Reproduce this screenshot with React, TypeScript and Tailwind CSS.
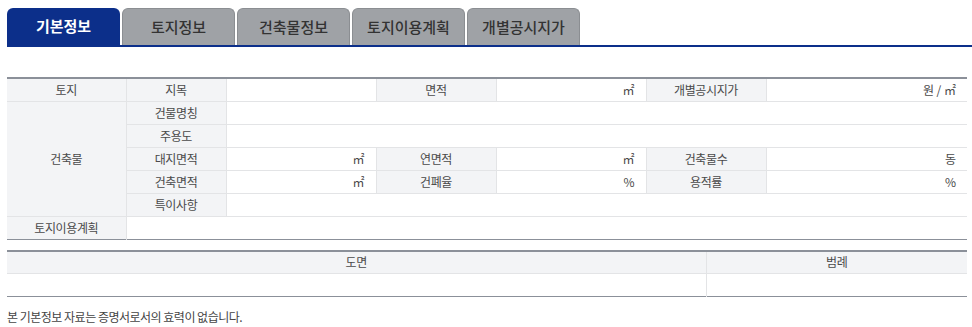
import React from 'react';

const tabs = ['기본정보', '토지정보', '건축물정보', '토지이용계획', '개별공시지가'];

const th = 'h-[23px] bg-[#f3f4f6] border border-[#e3e4e6] text-center font-normal text-[#4a4a4a] p-0 tracking-[-0.4px]';
const td = 'h-[23px] border border-[#e3e4e6] bg-white text-right pr-[11px] text-[#4a4a4a] p-0';

export default function App() {
  return (
    <div
      className="w-[972px] h-[327px] bg-white pt-[8px] text-[12px]"
      style={{ fontFamily: '"Noto Sans CJK KR", "Noto Sans", sans-serif' }}
    >
      {/* 탭 */}
      <div className="flex gap-[2px] pl-[7px] h-[37px]">
        {tabs.map((t, i) => (
          <div
            key={t}
            className={
              i === 0
                ? 'w-[113px] h-full rounded-t-[6px] bg-[#0c2f8a] text-white font-bold text-[15px] flex items-center justify-center'
                : 'w-[113px] h-full rounded-t-[6px] bg-[#9fa2a6] border border-b-0 border-[#8b8e92] text-[#333] font-medium text-[15px] flex items-center justify-center'
            }
          >
            {t}
          </div>
        ))}
      </div>
      <div className="ml-[7px] h-[2px] bg-[#0c2f8a]" />

      {/* 기본정보 표 */}
      <div className="pl-[7px] pr-[5px] pt-[30px]">
        <table className="w-[960px] table-fixed border-collapse border-t-2 border-t-[#8b9099] border-b border-b-[#8b9099] leading-none">
          <colgroup>
            <col className="w-[119px]" />
            <col className="w-[100px]" />
            <col className="w-[150px]" />
            <col className="w-[120px]" />
            <col className="w-[150px]" />
            <col className="w-[120px]" />
            <col className="w-[201px]" />
          </colgroup>
          <tbody>
            <tr>
              <th className={th + ' border-l-0'}>토지</th>
              <th className={th}>지목</th>
              <td className={td}></td>
              <th className={th}>면적</th>
              <td className={td}>㎡</td>
              <th className={th}>개별공시지가</th>
              <td className={td + ' border-r-0'}>원 / ㎡</td>
            </tr>
            <tr>
              <th rowSpan={5} className={th + ' border-l-0'}>건축물</th>
              <th className={th}>건물명칭</th>
              <td colSpan={5} className={td + ' border-r-0'}></td>
            </tr>
            <tr>
              <th className={th}>주용도</th>
              <td colSpan={5} className={td + ' border-r-0'}></td>
            </tr>
            <tr>
              <th className={th}>대지면적</th>
              <td className={td}>㎡</td>
              <th className={th}>연면적</th>
              <td className={td}>㎡</td>
              <th className={th}>건축물수</th>
              <td className={td + ' border-r-0'}>동</td>
            </tr>
            <tr>
              <th className={th}>건축면적</th>
              <td className={td}>㎡</td>
              <th className={th}>건폐율</th>
              <td className={td}>%</td>
              <th className={th}>용적률</th>
              <td className={td + ' border-r-0'}>%</td>
            </tr>
            <tr>
              <th className={th}>특이사항</th>
              <td colSpan={5} className={td + ' border-r-0'}></td>
            </tr>
            <tr>
              <th className={th + ' border-l-0 border-b-0'}>토지이용계획</th>
              <td colSpan={6} className={td + ' border-r-0 border-b-0'}></td>
            </tr>
          </tbody>
        </table>
      </div>

      {/* 도면 / 범례 */}
      <div className="pl-[7px] pr-[5px] pt-[10px]">
        <table className="w-[960px] table-fixed border-collapse border-t-2 border-t-[#8b9099] border-b border-b-[#8b9099] leading-none">
          <colgroup>
            <col className="w-[699px]" />
            <col className="w-[261px]" />
          </colgroup>
          <tbody>
            <tr>
              <th className={th + ' border-l-0 border-t-0'}>도면</th>
              <th className={th + ' border-r-0 border-t-0'}>범례</th>
            </tr>
            <tr>
              <td className={td + ' border-l-0 border-b-0'}></td>
              <td className={td + ' border-r-0 border-b-0'}></td>
            </tr>
          </tbody>
        </table>
      </div>

      <p className="pl-[7px] pt-[14px] text-[#444] leading-none tracking-[-0.5px]">본 기본정보 자료는 증명서로서의 효력이 없습니다.</p>
    </div>
  );
}
